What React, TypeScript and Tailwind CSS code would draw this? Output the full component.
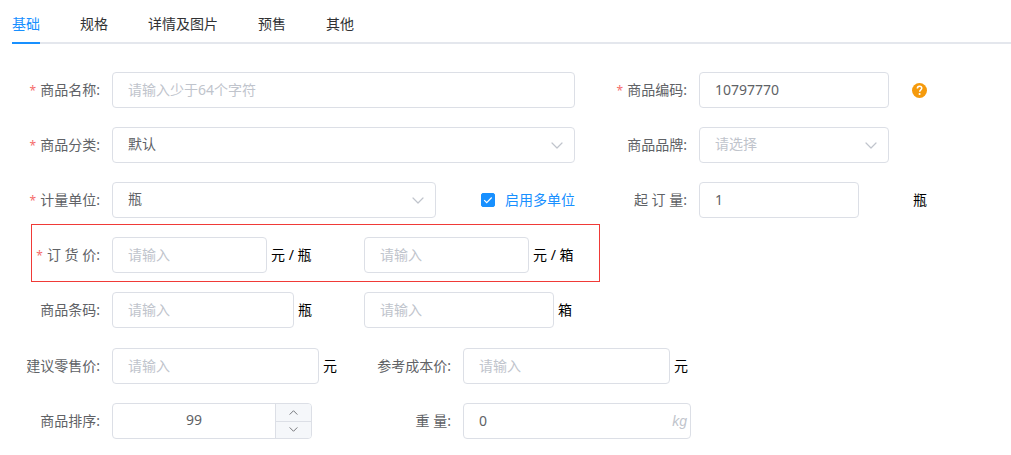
import React, { useState } from 'react';

const tabs = ['基础', '规格', '详情及图片', '预售', '其他'];

const boxStyle =
  'h-9 rounded border border-[#dcdfe6] bg-white px-[15px] pb-0.5 text-sm text-[#606266] placeholder:text-[#c0c4cc] outline-none focus:border-[#1890ff]';

type LabelProps = {
  htmlFor: string;
  text: string;
  required?: boolean;
  className?: string;
};

function Label({ htmlFor, text, required, className = 'w-[100px]' }: LabelProps) {
  return (
    <label htmlFor={htmlFor} className={`mr-3 shrink-0 whitespace-nowrap text-right text-[#606266] ${className}`}>
      {required && <span className="mr-1 text-xs text-[#f56c6c]">*</span>}
      {text}
    </label>
  );
}

function Chevron({ className }: { className: string }) {
  return (
    <svg viewBox="0 0 12 7" fill="none" stroke="currentColor" className={className}>
      <path d="M1 1l5 5 5-5" strokeWidth="1.2" strokeLinecap="round" strokeLinejoin="round" />
    </svg>
  );
}

type SelectProps = {
  id: string;
  options: string[];
  placeholder?: string;
  className: string;
};

function Select({ id, options, placeholder, className }: SelectProps) {
  const [value, setValue] = useState(placeholder ? '' : options[0]);

  return (
    <div className={`relative ${className}`}>
      <select
        id={id}
        value={value}
        onChange={(e) => setValue(e.target.value)}
        className={`w-full appearance-none ${boxStyle} ${value === '' ? 'text-[#c0c4cc]' : ''}`}
      >
        {placeholder && <option value="">{placeholder}</option>}
        {options.map((option) => (
          <option key={option} value={option}>{option}</option>
        ))}
      </select>
      <Chevron className="pointer-events-none absolute right-3 top-[15px] h-[7px] w-3 text-[#c0c4cc]" />
    </div>
  );
}

function Unit({ children }: { children: React.ReactNode }) {
  return <span className="ml-1 shrink-0 whitespace-nowrap text-black">{children}</span>;
}

export default function App() {
  const [activeTab, setActiveTab] = useState(tabs[0]);
  const [multiUnit, setMultiUnit] = useState(true);
  const [sort, setSort] = useState(99);

  return (
    <div className="bg-white pb-4 font-['Noto_Sans','Noto_Sans_CJK_SC',sans-serif] text-sm leading-5">
      <div role="tablist" className="ml-3 flex h-11 gap-10 border-b-2 border-[#e4e7ed]">
        {tabs.map((tab) => (
          <button
            key={tab}
            role="tab"
            aria-selected={tab === activeTab}
            onClick={() => setActiveTab(tab)}
            className={`-mb-0.5 border-b-2 pt-1.5 ${tab === activeTab ? 'border-[#1890ff] text-[#1890ff]' : 'border-transparent text-[#303133]'}`}
          >
            {tab}
          </button>
        ))}
      </div>

      <form className="mt-7">
        <div className="flex flex-col gap-[19px]">
          <div className="grid grid-cols-[587fr_424fr]">
            <div className="flex items-center pr-3">
              <Label htmlFor="name" text="商品名称:" required />
              <input id="name" placeholder="请输入少于64个字符" className={`min-w-0 flex-1 ${boxStyle}`} />
            </div>
            <div className="flex items-center">
              <Label htmlFor="code" text="商品编码:" required />
              <input id="code" defaultValue="10797770" className={`w-[190px] ${boxStyle}`} />
              <button type="button" aria-label="帮助" className="ml-[23px]">
                <svg viewBox="0 0 16 16" className="size-[15px]">
                  <circle cx="8" cy="8" r="8" fill="#f59a0c" />
                  <path d="M5.7 5.9c0-1.5 1-2.4 2.4-2.4s2.3.9 2.3 2.1c0 1.6-2.2 1.8-2.2 3.6" fill="none" stroke="#fff" strokeWidth="1.6" />
                  <circle cx="8.1" cy="11.7" r="1.1" fill="#fff" />
                </svg>
              </button>
            </div>
          </div>

          <div className="grid grid-cols-[587fr_424fr]">
            <div className="flex items-center pr-3">
              <Label htmlFor="category" text="商品分类:" required />
              <Select id="category" options={['默认']} className="min-w-0 flex-1" />
            </div>
            <div className="flex items-center">
              <Label htmlFor="brand" text="商品品牌:" />
              <Select id="brand" options={[]} placeholder="请选择" className="w-[190px]" />
            </div>
          </div>

          <div className="grid grid-cols-[587fr_424fr]">
            <div className="flex items-center pr-3">
              <Label htmlFor="unit" text="计量单位:" required />
              <Select id="unit" options={['瓶', '箱']} className="min-w-0 flex-1" />
              <label className="ml-[45px] flex items-center gap-2.5 whitespace-nowrap text-[#1890ff]">
                <span className="relative size-3.5">
                  <input
                    type="checkbox"
                    checked={multiUnit}
                    onChange={(e) => setMultiUnit(e.target.checked)}
                    className="block size-3.5 appearance-none rounded-xs border border-[#dcdfe6] checked:border-[#1890ff] checked:bg-[#1890ff]"
                  />
                  <svg viewBox="0 0 14 14" className="pointer-events-none absolute inset-0 size-3.5">
                    <path d="M3.2 7.2l2.5 2.5 5-5.2" fill="none" stroke="#fff" strokeWidth="1.2" />
                  </svg>
                </span>
                启用多单位
              </label>
            </div>
            <div className="flex items-center">
              <Label htmlFor="min-order" text="起 订 量:" />
              <input id="min-order" defaultValue="1" className={`w-40 ${boxStyle}`} />
              <span className="ml-[54px] text-black">瓶</span>
            </div>
          </div>

          {/* highlighted price row, the border grows into the gaps around it */}
          <div className="-mb-[9px] -mt-[13px] ml-[31px] flex w-[569px] items-center border border-[#f03a37] pb-2 pt-3">
            <Label htmlFor="price" text="订 货 价:" required className="w-[68px]" />
            <div className="flex w-[252px] items-center">
              <input id="price" placeholder="请输入" className={`w-[155px] ${boxStyle}`} />
              <Unit>元 / 瓶</Unit>
            </div>
            <input aria-label="订货价 元/箱" placeholder="请输入" className={`w-[165px] ${boxStyle}`} />
            <Unit>元 / 箱</Unit>
          </div>

          <div className="flex items-center">
            <Label htmlFor="barcode" text="商品条码:" />
            <div className="flex w-[252px] items-center">
              <input id="barcode" placeholder="请输入" className={`w-[182px] ${boxStyle}`} />
              <Unit>瓶</Unit>
            </div>
            <input aria-label="商品条码 箱" placeholder="请输入" className={`w-[190px] ${boxStyle}`} />
            <Unit>箱</Unit>
          </div>
        </div>

        <div className="mt-5 flex flex-col gap-[19px]">
          <div className="flex items-center">
            <Label htmlFor="retail" text="建议零售价:" />
            <div className="flex w-[239px] items-center">
              <input id="retail" placeholder="请输入" className={`w-[207px] ${boxStyle}`} />
              <Unit>元</Unit>
            </div>
            <Label htmlFor="cost" text="参考成本价:" />
            <input id="cost" placeholder="请输入" className={`w-[207px] ${boxStyle}`} />
            <Unit>元</Unit>
          </div>

          <div className="flex items-center">
            <Label htmlFor="sort" text="商品排序:" />
            <div className="w-[239px]">
              <div className="flex h-9 w-[200px] overflow-hidden rounded border border-[#dcdfe6]">
                <input
                  id="sort"
                  value={sort}
                  onChange={(e) => setSort(Number(e.target.value) || 0)}
                  className="min-w-0 flex-1 pb-0.5 text-center text-[#606266] outline-none"
                />
                <div className="flex w-9 flex-col border-l border-[#dcdfe6] bg-[#f5f7fa] text-[#606266]">
                  <button
                    type="button"
                    aria-label="增加"
                    onClick={() => setSort(sort + 1)}
                    className="flex flex-1 items-center justify-center border-b border-[#dcdfe6]"
                  >
                    <Chevron className="h-[5px] w-[9px] rotate-180" />
                  </button>
                  <button
                    type="button"
                    aria-label="减少"
                    onClick={() => setSort(sort - 1)}
                    className="flex flex-1 items-center justify-center"
                  >
                    <Chevron className="h-[5px] w-[9px]" />
                  </button>
                </div>
              </div>
            </div>
            <Label htmlFor="weight" text="重 量:" />
            <div className="relative w-[228px]">
              <input id="weight" defaultValue="0" className={`w-full ${boxStyle}`} />
              <span className="absolute right-1 top-2 font-['Liberation_Sans',sans-serif] italic text-[#c0c4cc]">kg</span>
            </div>
          </div>
        </div>
      </form>
    </div>
  );
}
